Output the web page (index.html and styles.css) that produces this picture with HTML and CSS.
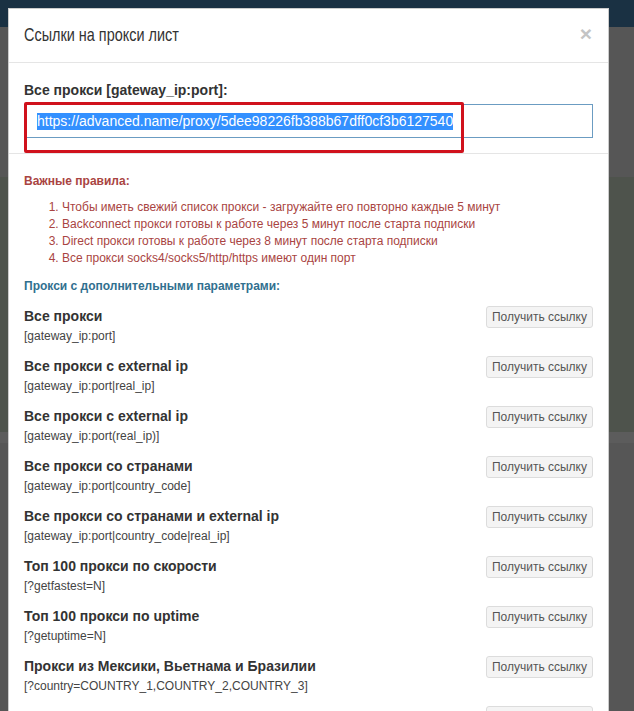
FILE: index.html
```html
<!DOCTYPE html>
<html lang="ru">
<head>
<meta charset="utf-8">
<title>Ссылки на прокси лист</title>
<link rel="stylesheet" href="styles.css">
</head>
<body>
<div class="modal">
  <div class="modal-header">
    <h4 class="modal-title">Ссылки на прокси лист</h4>
    <span class="close">×</span>
  </div>
  <div class="section section-main">
    <div class="label label-main">Все прокси [gateway_ip:port]:</div>
    <div class="input"><span class="sel">https://advanced.name/proxy/5dee98226fb388b67dff0cf3b6127540</span></div>
    <div class="highlight-box"></div>
  </div>
  <div class="section section-rules">
    <div class="label danger">Важные правила:</div>
    <ol class="rules">
      <li>Чтобы иметь свежий список прокси - загружайте его повторно каждые 5 минут</li>
      <li>Backconnect прокси готовы к работе через 5 минут после старта подписки</li>
      <li>Direct прокси готовы к работе через 8 минут после старта подписки</li>
      <li>Все прокси socks4/socks5/http/https имеют один порт</li>
    </ol>
    <div class="label info">Прокси с дополнительными параметрами:</div>
    <div class="rows">
      <div class="row"><div><div class="row-title">Все прокси</div><div class="row-sub">[gateway_ip:port]</div></div><button class="btn">Получить ссылку</button></div>
      <div class="row"><div><div class="row-title">Все прокси с external ip</div><div class="row-sub">[gateway_ip:port|real_ip]</div></div><button class="btn">Получить ссылку</button></div>
      <div class="row"><div><div class="row-title">Все прокси с external ip</div><div class="row-sub">[gateway_ip:port(real_ip)]</div></div><button class="btn">Получить ссылку</button></div>
      <div class="row"><div><div class="row-title">Все прокси со странами</div><div class="row-sub">[gateway_ip:port|country_code]</div></div><button class="btn">Получить ссылку</button></div>
      <div class="row"><div><div class="row-title">Все прокси со странами и external ip</div><div class="row-sub">[gateway_ip:port|country_code|real_ip]</div></div><button class="btn">Получить ссылку</button></div>
      <div class="row"><div><div class="row-title">Топ 100 прокси по скорости</div><div class="row-sub">[?getfastest=N]</div></div><button class="btn">Получить ссылку</button></div>
      <div class="row"><div><div class="row-title">Топ 100 прокси по uptime</div><div class="row-sub">[?getuptime=N]</div></div><button class="btn">Получить ссылку</button></div>
      <div class="row"><div><div class="row-title">Прокси из Мексики, Вьетнама и Бразилии</div><div class="row-sub">[?country=COUNTRY_1,COUNTRY_2,COUNTRY_3]</div></div><button class="btn">Получить ссылку</button></div>
      <div class="row row-last"><div></div><button class="btn">Получить ссылку</button></div>
    </div>
  </div>
</div>
</body>
</html>
```
FILE: styles.css
```css
html, body {
  margin: 0;
  padding: 0;
}
body {
  font-family: "Liberation Sans", Arial, sans-serif;
  color: #333;
  padding: 8px 0 0 8px;
  min-height: 711px;
  background:
    linear-gradient(#1a3143, #1a3143) 0 0 / 100% 27px no-repeat,
    linear-gradient(#4e534c, #4e534c) 0 177px / 100% 255px no-repeat,
    linear-gradient(#5c5c5c, #5c5c5c) 0 432px / 100% 11px no-repeat,
    #565656;
}
.modal {
  width: 601px;
  box-sizing: border-box;
  background: #fff;
  border: 1px solid rgba(0, 0, 0, 0.2);
  border-bottom: none;
}
.modal-header {
  height: 53px;
  border-bottom: 1px solid #e5e5e5;
  display: flex;
  align-items: center;
  justify-content: space-between;
  padding: 0 15px;
}
.modal-title {
  margin: 0 0 2px 0;
  font-size: 19px;
  font-weight: normal;
  color: #333;
  line-height: 20px;
  transform: scaleX(0.76);
  transform-origin: left center;
}
.close {
  font-size: 21px;
  font-weight: bold;
  color: #c4c4c4;
  line-height: 20px;
  margin-right: 1px;
  margin-top: -4px;
}
.section {
  padding: 0 15px;
}
.section-main {
  position: relative;
  padding-top: 18px;
  padding-bottom: 15px;
  border-bottom: 1px solid #e5e5e5;
}
.label {
  font-size: 12px;
  font-weight: bold;
  line-height: 18px;
}
.label-main {
  font-size: 14px;
}
.label.danger {
  color: #a94442;
}
.label.info {
  color: #31708f;
  margin-top: 10px;
}
.input {
  margin-top: 5px;
  height: 34px;
  box-sizing: border-box;
  border: 1px solid #6b9cc2;
  padding: 0 12px;
  display: flex;
  align-items: center;
  font-size: 14px;
  color: #555;
}
.sel {
  background: #3390ff;
  color: #fff;
  line-height: 17px;
}
.highlight-box {
  position: absolute;
  left: 15px;
  top: 39px;
  width: 440px;
  height: 51px;
  box-sizing: border-box;
  border: 3px solid #d0111c;
  border-radius: 2px;
}
.section-rules {
  padding-top: 18px;
}
.rules {
  margin: 9px 0 0 0;
  padding-left: 38px;
  font-size: 12px;
  line-height: 17px;
  color: #a94442;
}
.rows {
  margin-top: 11px;
}
.row {
  display: flex;
  justify-content: space-between;
  align-items: flex-start;
  height: 50px;
}
.row-title {
  font-size: 14px;
  font-weight: bold;
  line-height: 20px;
  color: #333;
}
.row-sub {
  font-size: 12px;
  line-height: 17px;
  margin-top: 2px;
  color: #444;
}
.btn {
  font-family: "Liberation Sans", Arial, sans-serif;
  font-size: 12px;
  line-height: 18px;
  height: 22px;
  padding: 1px 5px;
  box-sizing: border-box;
  background: #f4f4f4;
  border: 1px solid #dcdcdc;
  border-radius: 3px;
  color: #555;
}
```
